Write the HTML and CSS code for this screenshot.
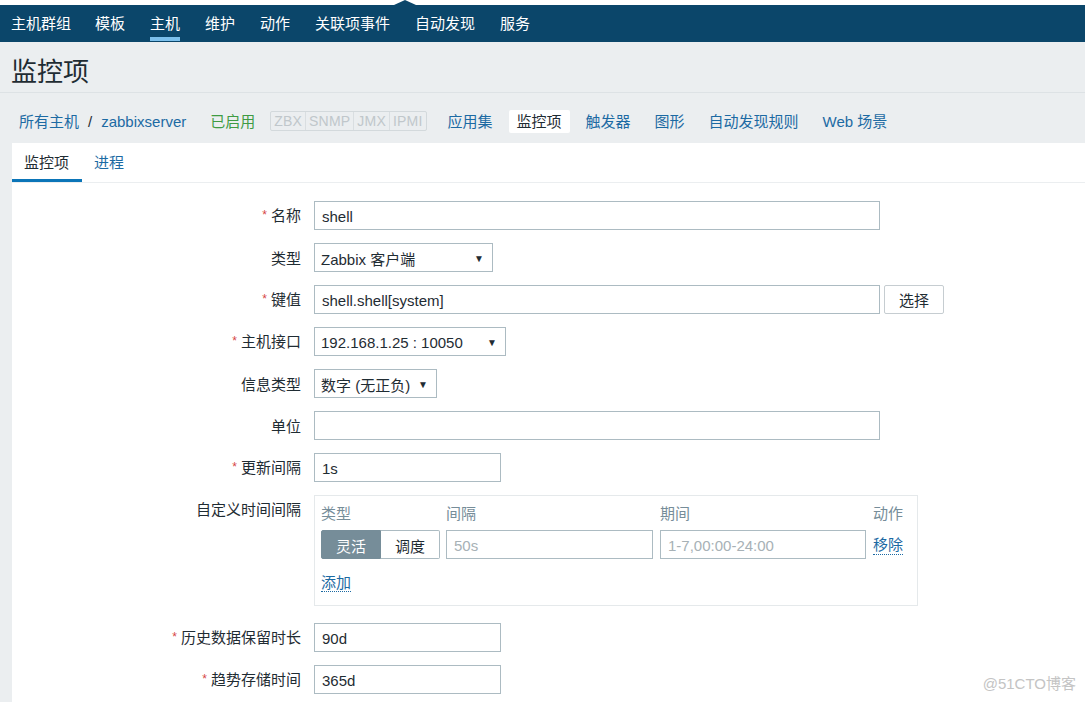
FILE: index.html
```html
<!DOCTYPE html>
<html lang="zh">
<head>
<meta charset="utf-8">
<title>监控项</title>
<link rel="stylesheet" href="styles.css">
</head>
<body>
<div class="topstrip"><span class="notch"></span></div>
<nav class="mainnav">
  <a class="navitem">主机群组</a>
  <a class="navitem">模板</a>
  <a class="navitem active">主机</a>
  <a class="navitem">维护</a>
  <a class="navitem">动作</a>
  <a class="navitem">关联项事件</a>
  <a class="navitem">自动发现</a>
  <a class="navitem">服务</a>
</nav>
<header class="pagehead">
  <h1 class="title">监控项</h1>
</header>
<div class="crumbs">
  <a class="crumb link first">所有主机</a>
  <span class="sep">/</span>
  <a class="crumb link host">zabbixserver</a>
  <span class="crumb green">已启用</span>
  <span class="status">
    <span class="stbox">ZBX</span><span class="stbox">SNMP</span><span class="stbox">JMX</span><span class="stbox">IPMI</span>
  </span>
  <a class="crumb link">应用集</a>
  <span class="crumb selected">监控项</span>
  <a class="crumb link">触发器</a>
  <a class="crumb link">图形</a>
  <a class="crumb link">自动发现规则</a>
  <a class="crumb link">Web 场景</a>
</div>
<main class="panel">
  <div class="tabs">
    <span class="tab active">监控项</span>
    <span class="tab">进程</span>
  </div>
  <form class="form">
    <div class="row">
      <label class="lbl"><span class="req">*</span>名称</label>
      <div class="field"><div class="input wide">shell</div></div>
    </div>
    <div class="row">
      <label class="lbl">类型</label>
      <div class="field"><div class="select w179"><span>Zabbix 客户端</span><span class="arrow">▼</span></div></div>
    </div>
    <div class="row">
      <label class="lbl"><span class="req">*</span>键值</label>
      <div class="field"><div class="input wide">shell.shell[system]</div><button type="button" class="btn">选择</button></div>
    </div>
    <div class="row">
      <label class="lbl"><span class="req">*</span>主机接口</label>
      <div class="field"><div class="select w192"><span>192.168.1.25 : 10050</span><span class="arrow">▼</span></div></div>
    </div>
    <div class="row">
      <label class="lbl">信息类型</label>
      <div class="field"><div class="select w123"><span>数字 (无正负)</span><span class="arrow">▼</span></div></div>
    </div>
    <div class="row">
      <label class="lbl">单位</label>
      <div class="field"><div class="input wide"></div></div>
    </div>
    <div class="row">
      <label class="lbl"><span class="req">*</span>更新间隔</label>
      <div class="field"><div class="input short">1s</div></div>
    </div>
    <div class="row top">
      <label class="lbl lbltop">自定义时间间隔</label>
      <div class="field">
        <div class="intervals">
          <div class="irow ihead">
            <span class="c-type">类型</span>
            <span class="c-int">间隔</span>
            <span class="c-per">期间</span>
            <span class="c-act">动作</span>
          </div>
          <div class="irow">
            <div class="c-type seg"><span class="segbtn on">灵活</span><span class="segbtn">调度</span></div>
            <div class="c-int input ph">50s</div>
            <div class="c-per input ph">1-7,00:00-24:00</div>
            <a class="c-act dlink">移除</a>
          </div>
          <div class="addrow"><a class="dlink">添加</a></div>
        </div>
      </div>
    </div>
    <div class="row">
      <label class="lbl"><span class="req">*</span>历史数据保留时长</label>
      <div class="field"><div class="input short">90d</div></div>
    </div>
    <div class="row">
      <label class="lbl"><span class="req">*</span>趋势存储时间</label>
      <div class="field"><div class="input short">365d</div></div>
    </div>
  </form>
</main>
<div class="watermark">@51CTO博客</div>
</body>
</html>
```

FILE: styles.css
```css
* { box-sizing: border-box; }
html, body { margin: 0; padding: 0; }
body {
  background: #ebeef0;
  font-family: "Liberation Sans", Arial, "Noto Sans CJK SC", sans-serif;
  font-size: 15px;
  color: #1f2c33;
  width: 1085px;
  height: 702px;
  overflow: hidden;
  position: relative;
}
a { text-decoration: none; }

.topstrip {
  height: 5px;
  background: #ffffff;
  position: relative;
}
.notch {
  position: absolute;
  left: 394px;
  top: 0;
  width: 0;
  height: 0;
  border-left: 11px solid transparent;
  border-right: 11px solid transparent;
  border-bottom: 5px solid #0b466a;
}

.mainnav {
  height: 37px;
  background: #0b466a;
  display: flex;
  align-items: stretch;
}
.navitem {
  color: #ffffff;
  padding: 0 12px;
  display: flex;
  align-items: center;
  position: relative;
  line-height: 1;
  margin-right: 1px;
}
.navitem:first-child { padding-left: 11px; margin-right: 0; }
.navitem.active::after {
  content: "";
  position: absolute;
  left: 12px;
  right: 12px;
  bottom: 1px;
  height: 4px;
  background: #7cc0ec;
}

.pagehead {
  height: 51px;
  border-bottom: 1px solid #dde2e5;
  padding-left: 11px;
  display: flex;
  align-items: center;
}
.title {
  margin: 0;
  font-weight: normal;
  font-size: 26px;
  color: #1f2c33;
  line-height: 1;
  padding-top: 10px;
}

.crumbs {
  height: 50px;
  display: flex;
  align-items: center;
  padding-left: 11px;
  padding-top: 6px;
}
.crumb {
  padding: 0 8px;
  line-height: 23px;
  height: 23px;
  display: inline-block;
  margin-right: 8px;
}
.crumb.link { color: #1c6aa3; }
.crumb.first { margin-right: 0; }
.sep { color: #1f2c33; margin: 0 1px 0 1px; }
.crumb.host { padding-left: 8px; }
.crumb.green { color: #3f9b43; margin-right: 7px; }
.crumb.selected {
  background: #ffffff;
  border-radius: 2px;
  color: #1f2c33;
}
.status {
  display: inline-flex;
  border: 1px solid #d3d9dc;
  border-radius: 2px;
  height: 20px;
  margin-right: 13px;
  background: #ebeef0;
}
.stbox {
  font-size: 14px;
  color: #c0c7cb;
  line-height: 18px;
  padding: 0 3px;
  border-right: 1px solid #d9dee1;
  letter-spacing: 0.2px;
}
.stbox:last-child { border-right: 0; }

.panel {
  margin-left: 12px;
  background: #ffffff;
  height: 560px;
}
.tabs {
  height: 40px;
  border-bottom: 1px solid #ebeef0;
  display: flex;
}
.tab {
  height: 39px;
  padding: 0 13px 3px 12px;
  display: flex;
  align-items: center;
  color: #1c6aa3;
}
.tab.active {
  color: #1f2c33;
  border-bottom: 3px solid #0b75b8;
  padding-bottom: 0;
}

.form {
  padding-top: 18px;
  display: flex;
  flex-direction: column;
  gap: 13px;
}
.row {
  display: grid;
  grid-template-columns: 289px 1fr;
  column-gap: 13px;
  align-items: center;
}
.row.top { align-items: start; margin-bottom: 4px; }
.lbl {
  text-align: right;
  line-height: 18px;
  padding-top: 2px;
}
.lbltop { padding-top: 6px; }
.req {
  color: #d64545;
  font-size: 12px;
  margin-right: 4px;
  position: relative;
  top: -2px;
}
.field { display: flex; align-items: center; gap: 4px; }

.input {
  height: 29px;
  border: 1px solid #acbbc2;
  background: #ffffff;
  padding: 2px 7px 0;
  display: flex;
  align-items: center;
  color: #1f2c33;
  white-space: nowrap;
}
.input.wide { width: 566px; }
.input.short { width: 187px; }
.input.ph { color: #a7b1b6; }

.select {
  height: 29px;
  border: 1px solid #acbbc2;
  background: #ffffff;
  padding: 2px 8px 0 6px;
  display: flex;
  align-items: center;
  justify-content: space-between;
  white-space: nowrap;
}
.select.w179 { width: 179px; }
.select.w192 { width: 192px; }
.select.w123 { width: 123px; }
.arrow { font-size: 10px; color: #1f2c33; }

.btn {
  height: 29px;
  width: 60px;
  border: 1px solid #c6cdd1;
  border-radius: 2px;
  background: #ffffff;
  font: inherit;
  color: #1f2c33;
  padding: 0;
}

.intervals {
  width: 604px;
  border: 1px solid #e5e9eb;
  padding: 9px 6px 13px 6px;
}
.irow {
  display: grid;
  grid-template-columns: 119px 207px 207px 1fr;
  column-gap: 6px;
  align-items: center;
}
.irow .c-per { margin-left: 1px; }
.irow .c-act { margin-left: 1px; }
.ihead {
  color: #768d99;
  line-height: 18px;
  margin-bottom: 7px;
}
.seg {
  display: flex;
  height: 29px;
}
.segbtn {
  flex: 1;
  display: flex;
  align-items: center;
  justify-content: center;
  border: 1px solid #acbbc2;
  background: #ffffff;
  color: #1f2c33;
  padding-top: 1px;
}
.segbtn.on {
  background: #768d99;
  border-color: #768d99;
  color: #ffffff;
  border-radius: 2px 0 0 2px;
}
.segbtn:last-child { border-left: 0; border-radius: 0 2px 2px 0; }
.dlink {
  color: #1c6aa3;
  border-bottom: 1px dotted #1c6aa3;
  justify-self: start;
  line-height: 18px;
  width: max-content;
  padding-top: 2px;
}
.addrow { margin-top: 14px; line-height: 19px; }

.watermark {
  position: absolute;
  right: 9px;
  bottom: 9px;
  color: #c4c4c4;
  font-size: 15px;
}
```
